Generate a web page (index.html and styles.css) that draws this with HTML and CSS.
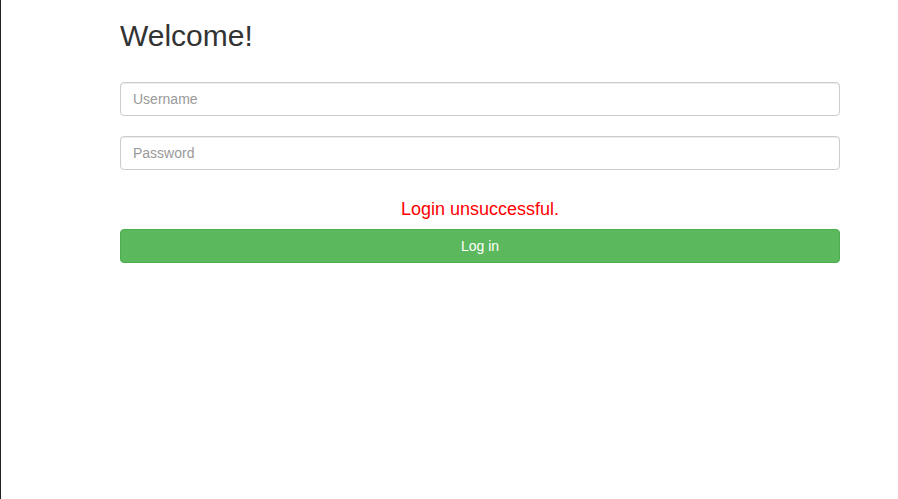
FILE: index.html
```html
<!DOCTYPE html>
<html>
<head>
<meta charset="utf-8">
<link rel="stylesheet" href="styles.css">
</head>
<body>
<div class="page">
  <div class="login">
    <h2 class="title">Welcome!</h2>
    <form class="form">
      <input class="field" type="text" placeholder="Username">
      <input class="field" type="password" placeholder="Password">
      <div class="error">Login unsuccessful.</div>
      <button class="btn" type="button">Log in</button>
    </form>
  </div>
</div>
</body>
</html>
```
FILE: styles.css
```css
html, body {
  margin: 0;
  padding: 0;
  height: 100%;
  background: #fff;
}
body {
  font-family: "Liberation Sans", Arial, sans-serif;
  font-size: 14px;
  color: #333;
}
.page {
  min-height: 100%;
  border-left: 1px solid #222;
  box-sizing: border-box;
}
.login {
  width: 720px;
  margin-left: 119px;
}
.title {
  margin: 0;
  padding-top: 19px;
  font-size: 30px;
  font-weight: 500;
  line-height: 33px;
  color: #333;
}
.form {
  display: flex;
  flex-direction: column;
  margin-top: 30px;
}
.field {
  height: 34px;
  box-sizing: border-box;
  padding: 6px 12px;
  font-family: inherit;
  font-size: 14px;
  color: #555;
  border: 1px solid #ccc;
  border-radius: 4px;
  box-shadow: inset 0 1px 1px rgba(0,0,0,.075);
  margin-bottom: 20px;
  outline: none;
}
.field::placeholder {
  color: #999;
}
.error {
  text-align: center;
  color: #f00;
  font-size: 18px;
  line-height: 20px;
  margin-top: 9px;
  margin-bottom: 10px;
}
.btn {
  height: 34px;
  box-sizing: border-box;
  background: #5cb85c;
  border: 1px solid #4cae4c;
  border-radius: 4px;
  color: #fff;
  font-family: inherit;
  font-size: 14px;
  padding: 6px 12px;
}
```
